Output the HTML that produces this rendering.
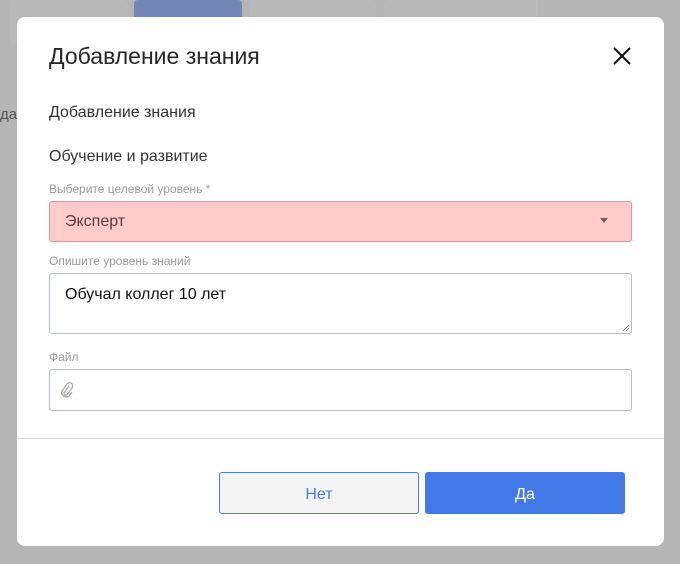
<!DOCTYPE html>
<html><head><meta charset="utf-8"><style>
*{box-sizing:border-box;margin:0;padding:0}
body{width:680px;height:564px;background:#b5b5b6;font-family:"Liberation Sans","Noto Sans CJK SC",sans-serif;position:relative;overflow:hidden}
.bg{position:absolute;border-radius:4px;background:#b9b9ba}
.modal{position:absolute;left:17px;top:17px;width:647px;height:529px;background:#fff;border-radius:8px}
.abs{position:absolute}
.t1{left:32px;top:26px;font-size:23px;color:#262626}
.t2{left:32px;top:87px;font-size:16px;color:#333}
.t3{left:32px;top:131px;font-size:16px;color:#333}
.lbl{font-size:12px;color:#9a9aa0;left:32px}
.field{left:32px;width:583px;border:1px solid #b8bccb;border-radius:3px;background:#fff}
.btn{top:455px;height:42px;width:200px;border-radius:3px;font-size:16px;display:flex;align-items:center;justify-content:center;padding-top:3px}
</style></head><body>
<div class="bg" style="left:10px;top:0;width:118px;height:44px"></div>
<div class="bg" style="left:134px;top:0;width:108px;height:20px;background:#7386b6"></div>
<div class="bg" style="left:250px;top:0;width:126px;height:20px"></div>
<div class="bg" style="left:384px;top:0;width:154px;height:20px"></div>
<div class="abs" style="left:0;top:106px;font-size:15px;color:#555">да</div>
<div class="modal">
<div class="abs t1">Добавление знания</div>
<svg class="abs" style="left:596px;top:30px" width="18" height="18" viewBox="0 0 18 18"><path d="M1 1L17 17M17 1L1 17" stroke="#111" stroke-width="2"/></svg>
<div class="abs t2">Добавление знания</div>
<div class="abs t3">Обучение и развитие</div>
<div class="abs lbl" style="top:165px">Выберите целевой уровень *</div>
<div class="abs field" style="top:184px;height:41px;background:#ffcccb;border-color:#d69a9c;font-size:16px;color:#5a3a3a;padding:11px 0 0 15px">Эксперт
<svg class="abs" style="left:550px;top:16px" width="8" height="5"><path d="M0 0H8L4 5Z" fill="#7a5a5a"/></svg></div>
<div class="abs lbl" style="top:237px">Опишите уровень знаний</div>
<div class="abs field" style="top:256px;height:61px;font-size:16px;color:#111;padding:12px 0 0 15px">Обучал коллег 10 лет
<svg class="abs" style="right:2px;bottom:2px" width="7" height="7"><path d="M7 1L1 7M7 4L4 7" stroke="#888" stroke-width="1"/></svg></div>
<div class="abs lbl" style="top:333px">Файл</div>
<div class="abs field" style="top:352px;height:42px">
<svg class="abs" style="left:10px;top:12px" width="14" height="17" viewBox="0 0 14 17"><path d="M9 4L4 11a2 2 0 0 0 3 2l5-7a3.2 3.2 0 0 0-5-4L2 9a4.5 4.5 0 0 0 7 5l3-4" stroke="#aaa" stroke-width="1.3" fill="none"/></svg></div>
<div class="abs" style="left:0;top:421px;width:647px;height:1px;background:#d5d5d8"></div>
<div class="abs btn" style="left:202px;background:#f4f4f4;border:1px solid #4a7be6;color:#4a7be6">Нет</div>
<div class="abs btn" style="left:408px;background:#4278e8;color:#fff">Да</div>
</div>
</body></html>
